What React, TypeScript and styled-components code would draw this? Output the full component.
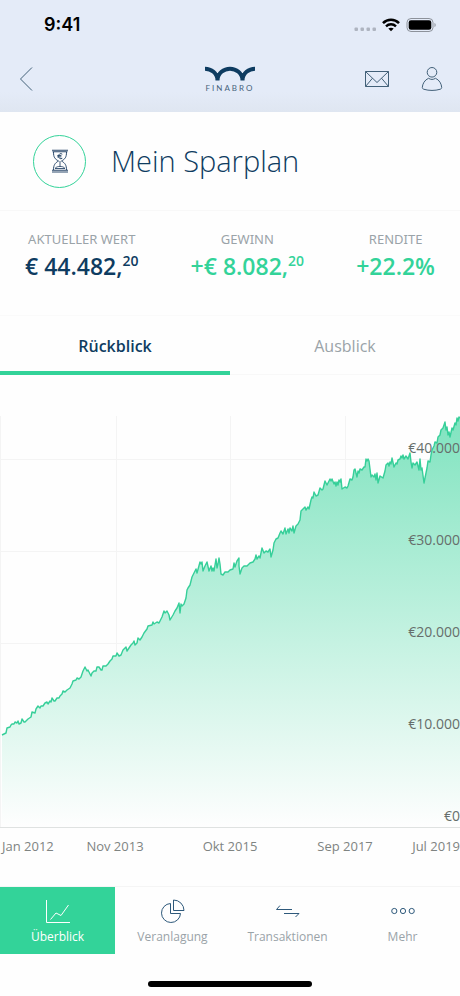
import React, { useState } from "react";
import styled, { createGlobalStyle } from "styled-components";

const navy = "#0e3c61";
const green = "#33d399";
const grey = "#9aa3a8";

const GlobalStyle = createGlobalStyle`
  *, *::before, *::after { box-sizing: border-box; }
  body {
    margin: 0;
    background: #fefefe;
    color: ${navy};
    font-family: "Open Sans", "Noto Sans", sans-serif;
  }
  button { font: inherit; }
`;

const Screen = styled.div`
  display: flex;
  flex-direction: column;
  min-height: 100vh;
`;

const Header = styled.header`
  padding-bottom: 4px;
  background: linear-gradient(#e4ebf8 82%, #dfe6f1);
`;

const StatusBar = styled.div`
  display: flex;
  align-items: center;
  justify-content: space-between;
  height: 50px;
  padding: 0 23px 0 44px;
`;

const Clock = styled.time`
  color: #000;
  font-family: Inter, sans-serif;
  font-size: 18px;
  font-weight: 600;
  line-height: 24px;
`;

const StatusIcons = styled.div`
  display: flex;
  align-items: center;
  gap: 6px;
`;

const NavBar = styled.nav`
  display: grid;
  grid-template-columns: 1fr auto 1fr;
  align-items: center;
  height: 58px;
  padding: 0 17px;
`;

const NavActions = styled.div`
  display: flex;
  justify-content: flex-end;
  gap: 32px;
`;

const IconButton = styled.button`
  display: flex;
  justify-self: start;
  padding: 0;
  border: 0;
  background: none;
  color: #426078;
  cursor: pointer;
`;

const Logo = styled.a`
  display: flex;
  flex-direction: column;
  align-items: center;
  gap: 3px;
  color: #48637b;
  font-family: Lato, sans-serif;
  font-size: 8px;
  line-height: 8px;
  letter-spacing: 2px;
  text-decoration: none;
`;

const PlanHeader = styled.section`
  display: flex;
  align-items: center;
  gap: 25px;
  height: 99px;
  padding: 0 33px;
  border-bottom: 1px solid #f8f8f8;
`;

const PlanIcon = styled.span`
  display: flex;
  align-items: center;
  justify-content: center;
  width: 53px;
  height: 53px;
  border: 1px solid ${green};
  border-radius: 50%;
`;

const PlanTitle = styled.h1`
  margin: 0;
  font-size: 29px;
  font-weight: 300;
  line-height: 40px;
`;

const Stats = styled.dl`
  display: flex;
  justify-content: space-between;
  height: 104px;
  margin: 0;
  padding: 18px 25px 0;
`;

const Stat = styled.div`
  text-align: center;
`;

const StatLabel = styled.dt`
  color: ${grey};
  font-family: "Noto Sans", sans-serif;
  font-size: 13px;
  line-height: 20px;
`;

const StatValue = styled.dd<{ $positive?: boolean }>`
  margin: 0;
  color: ${({ $positive }) => ($positive ? green : navy)};
  font-size: 23px;
  font-weight: 600;
  line-height: 34px;
`;

const Cents = styled.sup`
  font-size: 14px;
  line-height: 1px;
`;

const Tabs = styled.div`
  display: grid;
  grid-template-columns: 1fr 1fr;
  border-top: 1px solid #fafafa;
`;

const Tab = styled.button<{ $active: boolean }>`
  height: 59px;
  padding: ${({ $active }) => ($active ? "5px" : "2px")} 0 0;
  border: 0;
  border-bottom: ${({ $active }) => ($active ? `4px solid ${green}` : "1px solid #f8f8f8")};
  background: none;
  color: ${({ $active }) => ($active ? navy : grey)};
  font-size: 16px;
  font-weight: ${({ $active }) => ($active ? 600 : 400)};
  line-height: 24px;
  cursor: pointer;
`;

const ChartPanel = styled.section`
  padding-top: 41px;
`;

const Plot = styled.div`
  position: relative;
  border-bottom: 1px solid #dfe2e1;
`;

const PlotDrawing = styled.svg`
  display: block;
  width: 100%;
  height: 411px;
`;

const YAxis = styled.ul`
  position: absolute;
  right: 0;
  bottom: 1px;
  display: flex;
  flex-direction: column;
  gap: 72px;
  margin: 0;
  padding: 0;
  color: #666e6b;
  font-size: 14px;
  line-height: 20px;
  list-style: none;
  text-align: right;
`;

const XAxis = styled.div`
  display: grid;
  grid-template-columns: minmax(0, 1fr) repeat(3, minmax(0, 2fr)) minmax(0, 1fr);
  padding-top: 8px;
  color: #7f8482;
  font-size: 13px;
  line-height: 20px;
  text-align: center;
  white-space: nowrap;
`;

const XLabel = styled.span<{ $align?: "start" | "end" }>`
  justify-self: ${({ $align }) => $align ?? "center"};
  padding-left: ${({ $align }) => ($align === "start" ? "2px" : "0")};
`;

const BottomBar = styled.nav`
  display: grid;
  grid-template-columns: repeat(4, 1fr);
  margin-top: auto;
  border-top: 1px solid #f5f5f5;
`;

const BottomLink = styled.a<{ $active?: boolean }>`
  display: flex;
  flex-direction: column;
  align-items: center;
  height: 67px;
  padding-top: 12px;
  background: ${({ $active }) => ($active ? green : "transparent")};
  color: ${({ $active }) => ($active ? "#fff" : grey)};
  font-size: 12px;
  line-height: 20px;
  text-decoration: none;

  svg {
    margin-bottom: 3px;
    color: ${({ $active }) => ($active ? "#fff" : "#2e597b")};
  }
`;

const HomeIndicator = styled.div`
  align-self: center;
  width: 164px;
  height: 6px;
  margin: 27px 0 9px;
  border-radius: 3px;
  background: #000;
`;

const linePoints = `
2,735 4,734 6,733 7,728 10,727 11,725 12,724 14,724 15,722 17,723 18,721 19,724 21,723 22,719 24,722 25,722
27,720 28,719 31,717 32,712 35,713 36,709 38,706 40,708 41,706 43,706 45,703 47,702 48,704 50,701 51,702
52,698 54,701 55,701 57,698 59,698 60,696 62,694 63,691 65,692 67,690 70,688 72,684 73,681 76,680 77,678
79,679 81,677 83,671 85,667 87,671 88,670 91,676 92,673 94,671 96,671 97,667 99,667 101,670 102,670 103,666
106,666 108,664 110,661 112,659 113,656 116,656 117,653 119,656 121,655 123,650 125,648 126,647 127,651
129,648 131,645 133,643 134,641 135,645 137,643 138,638 140,640 142,637 144,633 147,629 148,626 152,625
153,622 154,624 157,622 159,623 161,619 162,617 164,611 165,613 167,611 169,615 170,620 173,615 175,611
177,608 179,603 180,613 181,604 182,606 184,604 186,598 187,590 188,588 190,585 192,577 194,573 196,569
197,573 200,562 201,564 202,562 203,571 205,566 207,562 209,571 211,566 212,571 213,568 214,571 216,559
217,568 218,564 219,558 220,564 221,574 223,575 225,572 228,572 230,570 233,569 234,563 235,567 237,561
239,558 239,566 240,574 242,568 244,566 247,566 250,563 253,562 255,559 256,555 257,559 259,556 260,558
262,548 264,553 266,551 268,552 270,549 271,557 273,550 274,543 276,539 278,538 280,533 281,531 283,534
285,528 286,534 288,529 289,533 290,528 292,531 293,526 294,533 296,526 298,524 300,520 301,511 303,509
305,507 306,510 308,507 309,509 311,500 312,497 313,498 314,492 316,496 318,495 320,488 322,490 323,489
325,481 327,485 329,481 330,479 331,481 332,479 334,484 335,482 336,486 337,482 338,485 339,480 340,482
341,479 342,489 345,487 347,488 348,486 350,479 352,480 353,477 354,470 355,469 357,477 358,471 359,473
360,469 362,470 364,467 365,467 366,459 367,461 368,459 369,461 371,477 372,475 374,477 375,474 376,480
377,473 378,483 380,476 383,478 385,471 386,465 388,463 389,466 390,462 391,464 392,458 394,467 396,463
397,464 398,460 400,459 401,456 402,458 403,455 404,459 406,456 408,459 410,453 411,462 412,468 413,463
415,465 417,462 419,470 420,459 421,470 422,468 424,483 426,473 427,468 428,461 430,462 431,455 432,450
434,446 435,442 437,443 438,437 440,435 441,430 443,428 445,422 446,430 447,427 448,435 449,432 450,437
452,428 453,430 455,423 456,425 457,418 458,421 459,417 460,418`;

const areaPoints = `2,827 ${linePoints} 460,827`;

const yLabels = ["€40.000", "€30.000", "€20.000", "€10.000", "€0"];

function StatusGlyphs() {
  return (
    <StatusIcons>
      <svg width="22" height="14" viewBox="0 0 22 14" fill="#aeb4c0" aria-hidden="true">
        {[0, 6, 12, 18].map((x) => (
          <rect key={x} x={x + 0.5} y="9.5" width="3.5" height="3.5" rx="1" />
        ))}
      </svg>
      <svg width="18" height="14" viewBox="0 0 18 14" fill="none" stroke="#000" aria-hidden="true">
        <path d="M1 5.1C5.5.7 12.5.7 17 5.1" strokeWidth="2.6" />
        <path d="M4 8.3C6.8 5.6 11.2 5.6 14 8.3" strokeWidth="2.4" />
        <path d="M9 13.3 6.3 10.6C7.8 9.3 10.2 9.3 11.7 10.6Z" fill="#000" stroke="none" />
      </svg>
      <svg width="31" height="14" viewBox="0 0 31 14" aria-hidden="true">
        <rect x="1" y="0.5" width="26" height="13" rx="4" fill="none" stroke="#8d929b" />
        <rect x="2.7" y="2.2" width="22.6" height="9.6" rx="2.3" />
        <path d="M28.5 5C30 5.3 30 8.7 28.5 9Z" fill="#8d929b" />
      </svg>
    </StatusIcons>
  );
}

function HourglassIcon() {
  return (
    <svg width="18" height="24" viewBox="0 0 18 24" fill="none" stroke="#2c4a6c" aria-hidden="true">
      <path d="M1 1.2H17M1.5 2.8H16.5M1 21.3H17M1 23H17" strokeWidth="1.1" />
      <path d="M2.5 3C2.5 8.5 4 10 7.5 12C4 14 2.5 16 2.5 21M15.5 3C15.5 8.5 14 10 10.5 12C14 14 15.5 16 15.5 21" />
      <path d="M11.3 5.2C9.5 3.9 7.6 4.9 7.6 7.2S9.5 10.4 11.3 9.3M6.3 6.6H10.4M6.3 7.9H10.4" />
      <path d="M9 12V17M4 19.5C5.5 17.5 7.5 17.5 9 17.5S12.5 17.5 14 19.5Z" strokeWidth="0.9" />
    </svg>
  );
}

export default function App() {
  const [tab, setTab] = useState(0);

  return (
    <Screen>
      <GlobalStyle />
      <Header>
        <StatusBar>
          <Clock>9:41</Clock>
          <StatusGlyphs />
        </StatusBar>
        <NavBar aria-label="Kopfzeile">
          <IconButton type="button" aria-label="Zurück">
            <svg width="22" height="24" viewBox="0 0 22 24" fill="none" stroke="currentColor">
              <path d="M15 0.5 3.5 12 15 23.5" />
            </svg>
          </IconButton>
          <Logo href="#start">
            <svg width="50" height="15" viewBox="0 0 50 15" fill="none" stroke={navy} aria-hidden="true">
              <path
                d="M0 2.8C6 2.8 12.5 7 12.5 14.5C12.5 7 19 2.8 25 2.8S37.5 7 37.5 14.5C37.5 7 44 2.8 50 2.8"
                strokeWidth="4"
                strokeLinejoin="bevel"
              />
            </svg>
            FINABRO
          </Logo>
          <NavActions>
            <IconButton type="button" aria-label="Nachrichten">
              <svg width="24" height="24" viewBox="0 0 24 24" fill="none" stroke="currentColor">
                <path d="M0.5 4.5H23.5V19.5H0.5ZM0.5 4.5 12 15.5 23.5 4.5M0.5 19.5 7.5 11.2M23.5 19.5 16.5 11.2" />
              </svg>
            </IconButton>
            <IconButton type="button" aria-label="Profil">
              <svg width="22" height="24" viewBox="0 0 22 24" fill="none" stroke="currentColor">
                <circle cx="11" cy="5.3" r="4.8" />
                <path d="M7.5 11.3C3.5 13 1.5 17 1.3 20.5C1.3 21.5 2 22 3 22.3C8 23.8 14 23.8 19 22.3C20 22 20.7 21.5 20.7 20.5C20.5 17 18.5 13 14.5 11.3C12 12.8 10 12.8 7.5 11.3Z" />
              </svg>
            </IconButton>
          </NavActions>
        </NavBar>
      </Header>

      <main>
        <PlanHeader>
          <PlanIcon>
            <HourglassIcon />
          </PlanIcon>
          <PlanTitle>Mein Sparplan</PlanTitle>
        </PlanHeader>

        <Stats>
          <Stat>
            <StatLabel>AKTUELLER WERT</StatLabel>
            <StatValue>
              € 44.482,<Cents>20</Cents>
            </StatValue>
          </Stat>
          <Stat>
            <StatLabel>GEWINN</StatLabel>
            <StatValue $positive>
              +€ 8.082,<Cents>20</Cents>
            </StatValue>
          </Stat>
          <Stat>
            <StatLabel>RENDITE</StatLabel>
            <StatValue $positive>+22.2%</StatValue>
          </Stat>
        </Stats>

        <Tabs role="tablist">
          {["Rückblick", "Ausblick"].map((label, index) => (
            <Tab
              key={label}
              type="button"
              role="tab"
              aria-selected={tab === index}
              $active={tab === index}
              onClick={() => setTab(index)}
            >
              {label}
            </Tab>
          ))}
        </Tabs>

        <ChartPanel>
          <Plot>
            <PlotDrawing viewBox="0 416 460 411" preserveAspectRatio="none" role="img" aria-label="Wertentwicklung">
              <defs>
                <linearGradient id="area" x1="0" y1="416" x2="0" y2="827" gradientUnits="userSpaceOnUse">
                  <stop offset="0" stopColor={green} stopOpacity="0.62" />
                  <stop offset="1" stopColor={green} stopOpacity="0" />
                </linearGradient>
              </defs>
              <path
                d="M0 459.5H460M0 551.5H460M0 643.5H460M0.5 416V827M116.5 416V827M230.5 416V827M345.5 416V827"
                stroke="#f4f4f4"
              />
              <polygon points={areaPoints} fill="#fefefe" />
              <polygon points={areaPoints} fill="url(#area)" />
              <polyline
                points={linePoints}
                fill="none"
                stroke="#36cf99"
                strokeWidth="1.4"
                strokeLinejoin="round"
                vectorEffect="non-scaling-stroke"
              />
            </PlotDrawing>
            <YAxis>
              {yLabels.map((label) => (
                <li key={label}>{label}</li>
              ))}
            </YAxis>
          </Plot>
          <XAxis>
            <XLabel $align="start">Jan 2012</XLabel>
            <XLabel>Nov 2013</XLabel>
            <XLabel>Okt 2015</XLabel>
            <XLabel>Sep 2017</XLabel>
            <XLabel $align="end">Jul 2019</XLabel>
          </XAxis>
        </ChartPanel>
      </main>

      <BottomBar aria-label="Hauptnavigation">
        <BottomLink href="#ueberblick" $active aria-current="page">
          <svg width="24" height="25" viewBox="0 0 24 25" fill="none" stroke="currentColor" aria-hidden="true">
            <path d="M0.5 1V23.5H24M4.5 20.5 10 14 15 16.5 22.5 6" />
          </svg>
          Überblick
        </BottomLink>
        <BottomLink href="#veranlagung">
          <svg width="24" height="25" viewBox="0 0 24 25" fill="none" stroke="currentColor" aria-hidden="true">
            <path d="M9.5 4.5A9.5 9.5 0 1 0 19.5 14.5H9.5Z" />
            <path d="M12.5 1V11.5H23A10.5 10.5 0 0 0 12.5 1Z" />
          </svg>
          Veranlagung
        </BottomLink>
        <BottomLink href="#transaktionen">
          <svg width="24" height="25" viewBox="0 0 24 25" fill="none" stroke="currentColor" aria-hidden="true">
            <path d="M16 10.5H0.5L4 6.5M8 14.5H23L19.5 18" />
          </svg>
          Transaktionen
        </BottomLink>
        <BottomLink href="#mehr">
          <svg width="24" height="25" viewBox="0 0 24 25" fill="none" stroke="currentColor" aria-hidden="true">
            <circle cx="3.3" cy="12" r="2.6" />
            <circle cx="12" cy="12" r="2.6" />
            <circle cx="20.7" cy="12" r="2.6" />
          </svg>
          Mehr
        </BottomLink>
      </BottomBar>
      <HomeIndicator />
    </Screen>
  );
}
